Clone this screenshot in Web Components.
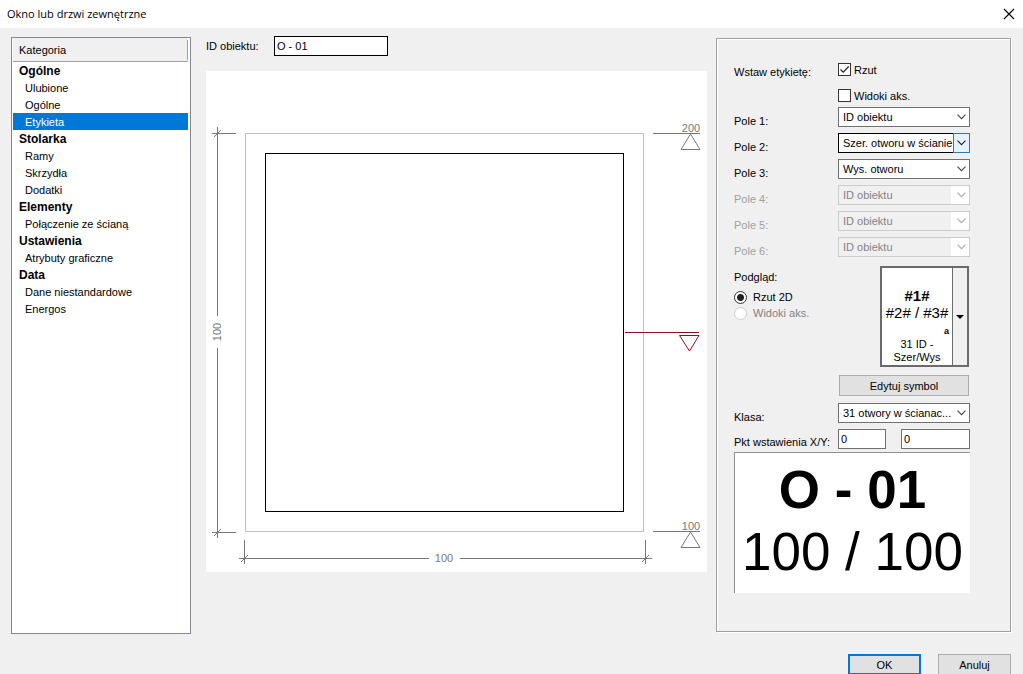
<!DOCTYPE html>
<html lang="pl">
<head>
<meta charset="utf-8">
<title>Okno lub drzwi zewnętrzne</title>
<style>
  html, body { margin: 0; height: 100%; overflow: hidden; background: #f0f0f0; }
  body { font: 11px/16px "Liberation Sans", Arial, sans-serif; color: #000; }
</style>
</head>
<body>
<object-dialog>
  <title-bar slot="title">Okno lub drzwi zewnętrzne</title-bar>
  <category-list slot="side"></category-list>
  <object-view slot="view"></object-view>
  <label-panel slot="panel"></label-panel>
  <dialog-button slot="actions" primary>OK</dialog-button>
  <dialog-button slot="actions">Anuluj</dialog-button>
</object-dialog>

<script>
const BASE = `*, *::before { box-sizing: border-box; }
  button, input, select { font: inherit; color: inherit; margin: 0; border-radius: 0; outline: none; }`;

class Base extends HTMLElement {
  connectedCallback() {
    if (this.shadowRoot) return;
    const t = document.createElement('template');
    t.innerHTML = `<style>${BASE}${this.css()}</style>${this.html()}`;
    this.attachShadow({ mode: 'open' }).append(t.content.cloneNode(true));
  }
  attr(name) { return this.getAttribute(name) || ''; }
}

customElements.define('object-dialog', class extends Base {
  css() { return `
    :host { display: block; min-height: 100%; background: #f0f0f0; }
    main { display: grid; grid-template-columns: 180px minmax(0, 1fr) 295px; padding: 8px 12px 0 11px; }
    .view { padding: 0 9px 0 15px; }
    .side { display: grid; padding-top: 1px; }
    .panel { padding: 2px 0; }
    footer { display: flex; justify-content: flex-end; gap: 17px; padding: 20px 12px 0; }`; }
  html() { return `
    <slot name="title"></slot>
    <main>
      <div class="side"><slot name="side"></slot></div>
      <div class="view"><slot name="view"></slot></div>
      <div class="panel"><slot name="panel"></slot></div>
    </main>
    <footer><slot name="actions"></slot></footer>`; }
});

customElements.define('title-bar', class extends Base {
  css() { return `
    :host { display: block; }
    header { display: flex; align-items: center; justify-content: space-between; height: 28px; padding: 0 8px 0 7px; background: #fff; }
    h1 { margin: 0; font: 11px/16px "Open Sans", "Noto Sans", sans-serif; }
    button { display: grid; padding: 0; border: 0; background: none; }`; }
  html() { return `
    <header>
      <h1><slot></slot></h1>
      <button type="button" aria-label="Zamknij">
        <svg width="12" height="12" viewBox="0 0 12 12" stroke="#000" stroke-width="1.1" fill="none"><path d="M1 1l10 10M11 1L1 11"/></svg>
      </button>
    </header>`; }
});

customElements.define('category-list', class extends Base {
  css() { return `
    :host { display: block; }
    nav { height: 100%; border: 1px solid #828790; background: #fff; padding: 0 2px 0 1px; }
    header { display: flex; align-items: center; height: 24px; padding: 2px 0 2px 6px; background: #f0f0f0; border-bottom: 1px solid #a0a0a0; }
    header span { flex: 1; line-height: 20px; border-right: 1px solid #a0a0a0; }
    h2 { margin: 0; padding: 2px 0 0 6px; font-size: 12px; line-height: 15px; }
    ul { margin: 0; padding: 0; list-style: none; }
    a { display: block; padding: 2px 0 0 12px; line-height: 15px; color: inherit; text-decoration: none; }
    a[aria-current] { background: #0078d7; color: #fff; }`; }
  html() {
    const groups = [
      ['Ogólne', ['Ulubione', 'Ogólne', 'Etykieta']],
      ['Stolarka', ['Ramy', 'Skrzydła', 'Dodatki']],
      ['Elementy', ['Połączenie ze ścianą']],
      ['Ustawienia', ['Atrybuty graficzne']],
      ['Data', ['Dane niestandardowe', 'Energos']]
    ];
    return `<nav><header><span>Kategoria</span></header>${groups.map(([h, items]) => `
      <h2>${h}</h2><ul>${items.map(i => `<li><a href="#"${i === 'Etykieta' ? ' aria-current="page"' : ''}>${i}</a></li>`).join('')}</ul>`).join('')}</nav>`;
  }
});

customElements.define('object-view', class extends Base {
  css() { return `
    :host { display: block; }
    .id { display: flex; align-items: center; height: 20px; margin-bottom: 15px; }
    label { width: 68px; }
    input { width: 114px; height: 20px; border: 1px solid #000; padding: 0 2px; background: #fff; }
    svg { display: block; width: 100%; height: auto; background: #fff; }
    text { font-size: 11px; fill: #777; stroke: none; }`; }
  html() { return `
    <div class="id"><label for="oid">ID obiektu:</label><input id="oid" value="O - 01"></div>
    <svg viewBox="0 0 501 501" fill="none" stroke="#777" role="img" aria-label="Widok okna">
      <rect x="39.5" y="62.5" width="398" height="398" stroke="#c0c0c0"/>
      <rect x="59.5" y="82.5" width="358" height="358" stroke="#000"/>
      <path d="M11.500 56V245M11.500 277V467M6 62.500H30M6 461.500H30M8 66l7-7M8 465l7-7"/>
      <path d="M33 487.500H223M254 487.500H446M38.500 469V493M439.500 469V493M35 491l7-7M436 491l7-7"/>
      <path d="M447 62.500H494M447 460.500H494"/>
      <path d="M484.500 63L475 78.500H494zM484.500 461L475 476.500H494z"/>
      <path d="M419 261.500H493M473.500 264.500H493L483.500 280z" stroke="#8b0f1c"/>
      <text x="238" y="491" text-anchor="middle">100</text>
      <text transform="translate(15 261) rotate(-90)" text-anchor="middle">100</text>
      <text x="485" y="61" text-anchor="middle">200</text>
      <text x="485" y="459" text-anchor="middle">100</text>
    </svg>`; }
});

customElements.define('check-option', class extends Base {
  css() { return `
    :host { display: block; }
    label { display: flex; align-items: center; gap: 3px; height: 13px; }
    input { appearance: none; display: grid; width: 13px; height: 13px; border: 1px solid #333; background: #fff; }
    input:checked { background: #fff url("data:image/svg+xml,%3Csvg xmlns='http://www.w3.org/2000/svg' viewBox='0 0 11 11'%3E%3Cpath d='M1.500 5.500L4.200 8.200L9.700 2.500' fill='none' stroke='%23222' stroke-width='1.200'/%3E%3C/svg%3E"); }`; }
  html() { return `<label><input type="checkbox"${this.hasAttribute('checked') ? ' checked' : ''}><slot></slot></label>`; }
});

customElements.define('field-select', class extends Base {
  css() { return `
    :host { display: grid; grid-template-columns: 104px 1fr; height: 26px; --line: #707070; --chevron: #444; }
    :host([disabled]) { --line: #ccc; --chevron: #aaa; color: #a0a0a0; }
    label { padding-top: 6px; }
    .box { display: grid; grid-template-columns: 1fr 17px; height: 20px; }
    select { grid-area: 1 / 1 / 2 / 3; appearance: none; width: 100%; height: 20px; padding: 0 0 0 4px; border: 1px solid var(--line); background: #fff; opacity: 1; }
    select:disabled { color: #838383; background: linear-gradient(90deg, #f0f0f0 112px, #fff 112px); }
    .arrow { grid-area: 1 / 2; display: grid; place-items: center; pointer-events: none; z-index: 1; }
    :host([active]) { --line: #000; --chevron: #222; }
    :host([active]) .arrow { background: #e5f1fb; border: 1px solid #2a7ab8; }`; }
  html() {
    return `<label for="s">${this.attr('label')}</label>
      <div class="box">
        <select id="s"${this.hasAttribute('disabled') ? ' disabled' : ''}><option>${this.attr('value')}</option></select>
        <span class="arrow"><svg width="9" height="6" viewBox="0 0 9 6" fill="none" stroke="var(--chevron)" stroke-width="1.100"><path d="M.5 .7l4 4 4-4"/></svg></span>
      </div>`;
  }
});

customElements.define('point-field', class extends Base {
  css() { return `
    :host { display: grid; grid-template-columns: 104px 1fr; height: 23px; }
    .pair { display: flex; justify-content: space-between; }
    label { padding-top: 5px; white-space: nowrap; }
    input { height: 20px; border: 1px solid #707070; padding: 0 2px; background: #fff; }
    #x { width: 48px; }
    #y { width: 69px; }`; }
  html() { return `<label for="x">Pkt wstawienia X/Y:</label><div class="pair"><input id="x" value="0"><input id="y" value="0" aria-label="Y"></div>`; }
});

customElements.define('symbol-picker', class extends Base {
  css() { return `
    :host { display: block; }
    button { display: grid; grid-template-columns: 1fr 15px; width: 89px; height: 101px; padding: 0; border: 2px solid #6a6a6a; background: #fff; }
    .sym { display: flex; flex-direction: column; padding-top: 19px; text-align: center; }
    .tag { font-size: 15px; line-height: 17px; white-space: nowrap; }
    .mark { font-size: 9px; line-height: 14px; font-weight: bold; text-align: right; padding-right: 3px; margin-top: 3px; }
    .name { line-height: 13px; }
    .drop { display: grid; place-items: center; height: 100%; background: #f0f0f0; border-left: 1px solid #6a6a6a; }`; }
  html() { return `
    <button type="button">
      <span class="sym"><b class="tag">#1#</b><span class="tag">#2# / #3#</span><span class="mark">a</span><span class="name">31 ID -<br>Szer/Wys</span></span>
      <span class="drop"><svg width="8" height="4" viewBox="0 0 8 4"><path d="M0 0h8L4 4z"/></svg></span>
    </button>`; }
});

customElements.define('dialog-button', class extends Base {
  css() { return `
    :host { display: block; width: 73px; }
    :host([wide]) { width: auto; }
    button { display: block; width: 100%; height: 21px; padding: 0; border: 1px solid #adadad; background: #e1e1e1; }
    :host([primary]) button { border: 2px solid #0078d7; }`; }
  html() { return `<button type="button"><slot></slot></button>`; }
});

customElements.define('label-preview', class extends Base {
  css() { return `
    :host { display: block; border-top: 1px solid #909090; border-left: 1px solid #909090; background: #fff; padding: 6px 0 10px; text-align: center; font-size: 53px; line-height: 62px; white-space: nowrap; }`; }
  html() { return `<div><b>O - 01</b></div><div>100 / 100</div>`; }
});

customElements.define('label-panel', class extends Base {
  css() { return `
    :host { display: block; border: 1px solid #a0a0a0; box-shadow: inset 1px 1px #fff, 1px 1px #fff; padding: 24px 40px 38px 17px; }
    .insert { display: grid; grid-template-columns: 104px 1fr; margin-bottom: 5px; }
    .insert > span { padding-top: 1px; }
    .checks { display: grid; gap: 13px; }
    .look { display: flex; justify-content: space-between; padding: 3px 1px 8px 0; }
    .look p { margin: 3px 0 4px; }
    .radio { display: flex; align-items: center; gap: 6px; height: 16px; }
    .radio input { appearance: none; width: 13px; height: 13px; border: 1px solid #333; border-radius: 50%; background: #fff; }
    .radio input:checked { background: radial-gradient(circle, #222 3px, #fff 4px); }
    .radio input:disabled { border-color: #ccc; }
    .off { color: #838383; }
    .edit { padding: 0 1px 7px 105px; }`; }
  html() {
    const fields = ['ID obiektu', 'Szer. otworu w ścianie', 'Wys. otworu', 'ID obiektu', 'ID obiektu', 'ID obiektu'];
    return `
    <div class="insert" role="group" aria-labelledby="ins">
      <span id="ins">Wstaw etykietę:</span>
      <div class="checks"><check-option checked>Rzut</check-option><check-option>Widoki aks.</check-option></div>
    </div>
    ${fields.map((v, i) => `<field-select label="Pole ${i + 1}:" value="${v}"${i === 1 ? ' active' : ''}${i > 2 ? ' disabled' : ''}></field-select>`).join('')}
    <div class="look">
      <div role="radiogroup" aria-labelledby="look">
        <p id="look">Podgląd:</p>
        <label class="radio"><input type="radio" name="look" checked>Rzut 2D</label>
        <label class="radio off"><input type="radio" name="look" disabled>Widoki aks.</label>
      </div>
      <symbol-picker></symbol-picker>
    </div>
    <div class="edit"><dialog-button wide>Edytuj symbol</dialog-button></div>
    <field-select label="Klasa:" value="31 otwory w ścianac..."></field-select>
    <point-field></point-field>
    <label-preview></label-preview>`;
  }
});
</script>
</body>
</html>
